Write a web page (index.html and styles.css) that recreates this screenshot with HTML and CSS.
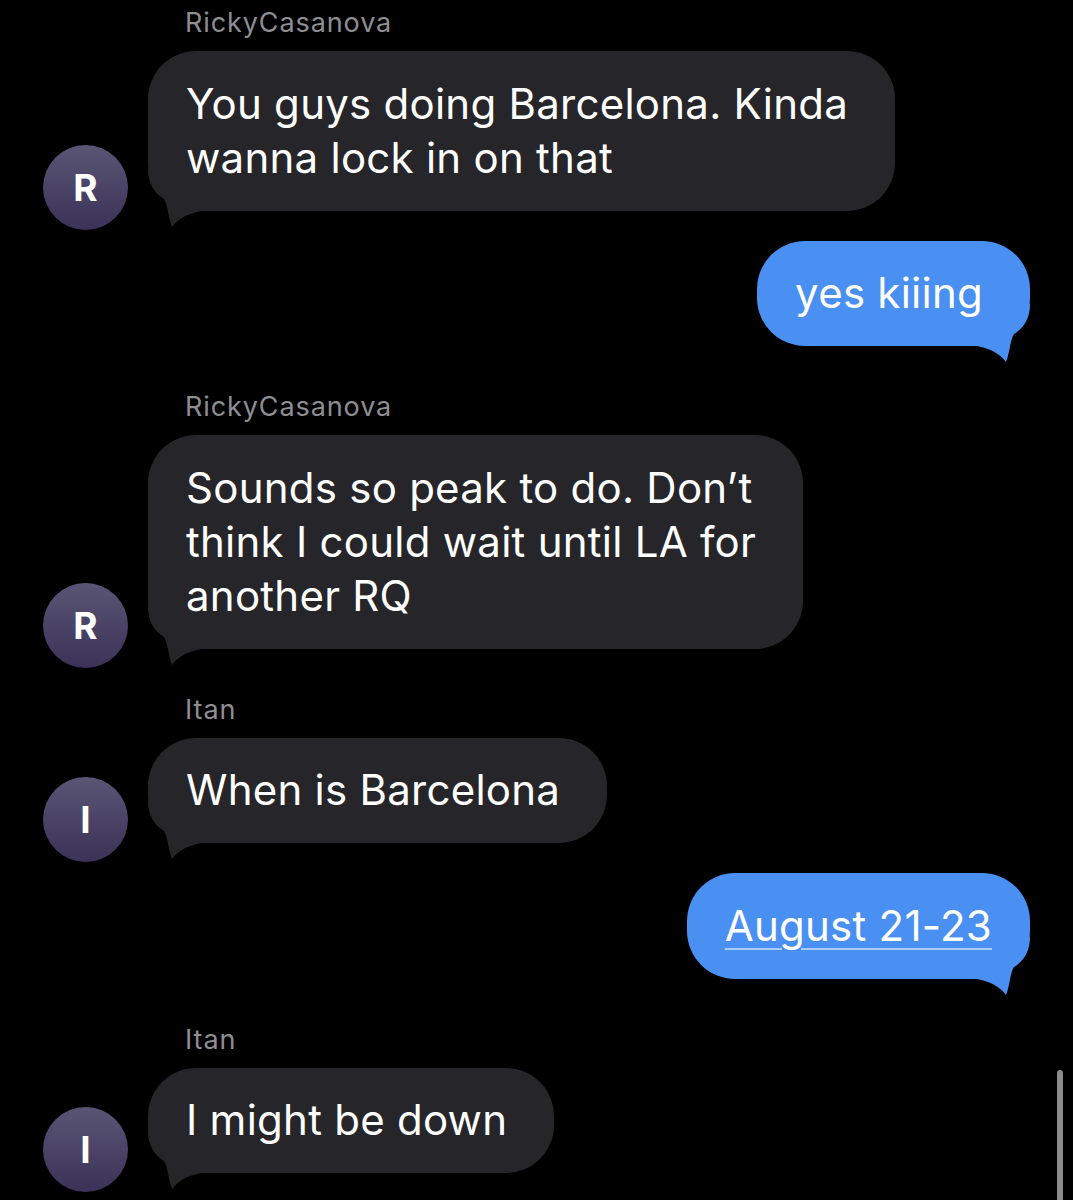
FILE: index.html
```html
<!DOCTYPE html>
<html>
  <head>
    <title>Messages</title>
    <link rel="stylesheet" href="styles.css">
  </head>
  <body>
    <div class="thread">

      <!-- RickyCasanova -->
      <div class="row in first">
        <div class="avatar">R</div>
        <div class="msg">
          <div class="name">RickyCasanova</div>
          <div class="bubble gray">You guys doing Barcelona. Kinda<br>wanna lock in on that
            <svg class="tail" viewBox="0 0 60 60"><path d="M0 0 C0 14 6 24 16 30 C20 36 20 48 24 58 C30 50 40 43 60 41 L60 0 Z"/></svg>
          </div>
        </div>
      </div>

      <div class="row out">
        <div class="bubble blue">yes kiiing
          <svg class="tail" viewBox="0 0 60 60"><path d="M0 0 C0 14 6 24 16 30 C20 36 20 48 24 58 C30 50 40 43 60 41 L60 0 Z"/></svg>
        </div>
      </div>

      <div class="row in">
        <div class="avatar">R</div>
        <div class="msg">
          <div class="name">RickyCasanova</div>
          <div class="bubble gray">Sounds so peak to do. Don’t<br>think I could wait until LA for<br>another RQ
            <svg class="tail" viewBox="0 0 60 60"><path d="M0 0 C0 14 6 24 16 30 C20 36 20 48 24 58 C30 50 40 43 60 41 L60 0 Z"/></svg>
          </div>
        </div>
      </div>

      <!-- Itan -->
      <div class="row in">
        <div class="avatar">I</div>
        <div class="msg">
          <div class="name">Itan</div>
          <div class="bubble gray">When is Barcelona
            <svg class="tail" viewBox="0 0 60 60"><path d="M0 0 C0 14 6 24 16 30 C20 36 20 48 24 58 C30 50 40 43 60 41 L60 0 Z"/></svg>
          </div>
        </div>
      </div>

      <div class="row out">
        <div class="bubble blue date"><span class="link">August 21-23</span>
          <svg class="tail" viewBox="0 0 60 60"><path d="M0 0 C0 14 6 24 16 30 C20 36 20 48 24 58 C30 50 40 43 60 41 L60 0 Z"/></svg>
        </div>
      </div>

      <div class="row in">
        <div class="avatar">I</div>
        <div class="msg">
          <div class="name">Itan</div>
          <div class="bubble gray">I might be down
            <svg class="tail" viewBox="0 0 60 60"><path d="M0 0 C0 14 6 24 16 30 C20 36 20 48 24 58 C30 50 40 43 60 41 L60 0 Z"/></svg>
          </div>
        </div>
      </div>

    </div>

    <div class="scrollbar"></div>
  </body>
</html>
```

FILE: styles.css
```css
*{
  margin:0;
  padding:0;
  box-sizing:border-box;
}

body{
  background-color:#000;
  color:#fff;
  font-family:Inter, "Open Sans", "Liberation Sans", sans-serif;
  overflow:hidden;
  height:1200px;
}

.thread{
  display:flex;
  flex-direction:column;
  padding:9px 43px 0 43px;
}

.row{
  display:flex;
  align-items:flex-end;
}

.row.in{
  margin-top:47px;
}

.row.in.first{
  margin-top:0;
}

.row.out{
  justify-content:flex-end;
  margin-top:30px;
}

.avatar{
  width:85px;
  height:85px;
  flex:none;
  border-radius:50%;
  margin-right:20px;
  margin-bottom:-19px;
  background:linear-gradient(#5a5574, #3a3258);
  display:flex;
  align-items:center;
  justify-content:center;
  font-size:37px;
  font-weight:700;
}

.msg{
  display:flex;
  flex-direction:column;
  align-items:flex-start;
}

.name{
  font-size:27px;
  line-height:28px;
  height:28px;
  letter-spacing:0.9px;
  color:#8e8e93;
  padding-left:37px;
  margin-bottom:14px;
}

.bubble{
  position:relative;
  z-index:0;
  font-size:42px;
  letter-spacing:0.25px;
  line-height:54px;
  padding:25.5px 47px 26px 38px;
  border-radius:48px;
  white-space:nowrap;
}

.bubble.gray{
  background-color:#262529;
}

.bubble.blue{
  background-color:#4a8ff2;
}

.bubble.date{
  padding-right:38px;
}

.tail{
  position:absolute;
  z-index:-1;
  bottom:-18px;
  width:60px;
  height:60px;
}

.gray .tail{
  left:0;
  fill:#262529;
}

.blue .tail{
  right:0;
  fill:#4a8ff2;
  transform:scaleX(-1);
}

.link{
  text-decoration:underline;
  text-decoration-color:#a9cbf7;
  text-decoration-thickness:2px;
  text-underline-offset:7px;
}

.scrollbar{
  position:absolute;
  left:1057px;
  top:1070px;
  width:6px;
  height:140px;
  border-radius:3px;
  background-color:#8c8c8c;
}
```
